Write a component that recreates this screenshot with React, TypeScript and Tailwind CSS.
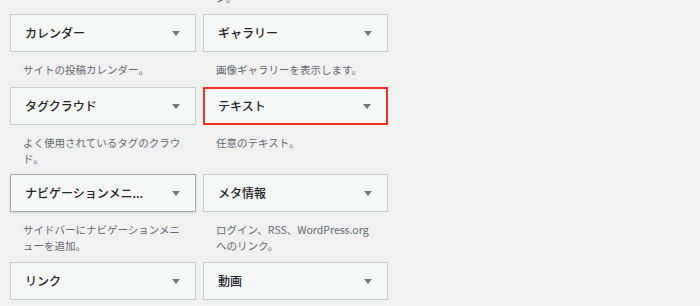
import React from "react";

const font = { fontFamily: '"Noto Sans CJK JP", "Noto Sans", sans-serif' };

function Arrow() {
  return (
    <svg width="8" height="5" viewBox="0 0 8 5" className="shrink-0">
      <polygon points="0,0 8,0 4,5" fill="#72777c" />
    </svg>
  );
}

type W = { title: string; lines: string[]; variant?: "red" | "focus" };

function Box({ w }: { w: W }) {
  const base =
    "h-[38px] flex items-center justify-between pr-[15px] bg-[#f6f7f7] text-[12px] font-medium text-[#1d2327]";
  const cls =
    w.variant === "red"
      ? `${base} border-2 border-[#f5321e] pl-[13px]`
      : w.variant === "focus"
      ? `${base} border border-[#a7aaad] shadow-[0_1px_2px_rgba(0,0,0,0.12)] pl-[14px]`
      : `${base} border border-[#cbcdcf] pl-[14px]`;
  return (
    <div className={cls}>
      <span className="whitespace-nowrap">{w.title}</span>
      <Arrow />
    </div>
  );
}

function Desc({ lines, h }: { lines: string[]; h: string }) {
  return (
    <div className={`${h} pt-[10px] px-[13px] text-[10.5px] leading-[16px] text-[#646970]`}>
      {lines.map((l, i) => (
        <div key={i} className="whitespace-nowrap">
          {l}
        </div>
      ))}
    </div>
  );
}

const rows: { items: [W, W]; h: string }[] = [
  {
    items: [
      { title: "カレンダー", lines: ["サイトの投稿カレンダー。"] },
      { title: "ギャラリー", lines: ["画像ギャラリーを表示します。"] },
    ],
    h: "h-[35px]",
  },
  {
    items: [
      { title: "タグクラウド", lines: ["よく使用されているタグのクラウ", "ド。"] },
      { title: "テキスト", lines: ["任意のテキスト。"], variant: "red" },
    ],
    h: "h-[49px]",
  },
  {
    items: [
      {
        title: "ナビゲーションメニ...",
        lines: ["サイドバーにナビゲーションメニ", "ューを追加。"],
        variant: "focus",
      },
      { title: "メタ情報", lines: ["ログイン、RSS、WordPress.org", "へのリンク。"] },
    ],
    h: "h-[50px]",
  },
  {
    items: [
      { title: "リンク", lines: [] },
      { title: "動画", lines: [] },
    ],
    h: "h-[20px]",
  },
];

export default function App() {
  return (
    <div className="w-[700px] h-[306px] overflow-hidden bg-[#f1f1f1]" style={font}>
      <div className="pl-[10px] flex flex-col">
        <div className="grid grid-cols-[186px_185px] gap-x-[7px] h-[14px] overflow-hidden">
          <div />
          <div className="px-[13px] text-[10.5px] leading-[16px] text-[#646970] mt-[-10px]">ン。</div>
        </div>
        {rows.map((r, i) => (
          <div key={i} className="grid grid-cols-[186px_185px] gap-x-[7px]">
            {r.items.map((w, j) => (
              <div key={j} className="flex flex-col">
                <Box w={w} />
                <Desc lines={w.lines} h={r.h} />
              </div>
            ))}
          </div>
        ))}
      </div>
    </div>
  );
}
